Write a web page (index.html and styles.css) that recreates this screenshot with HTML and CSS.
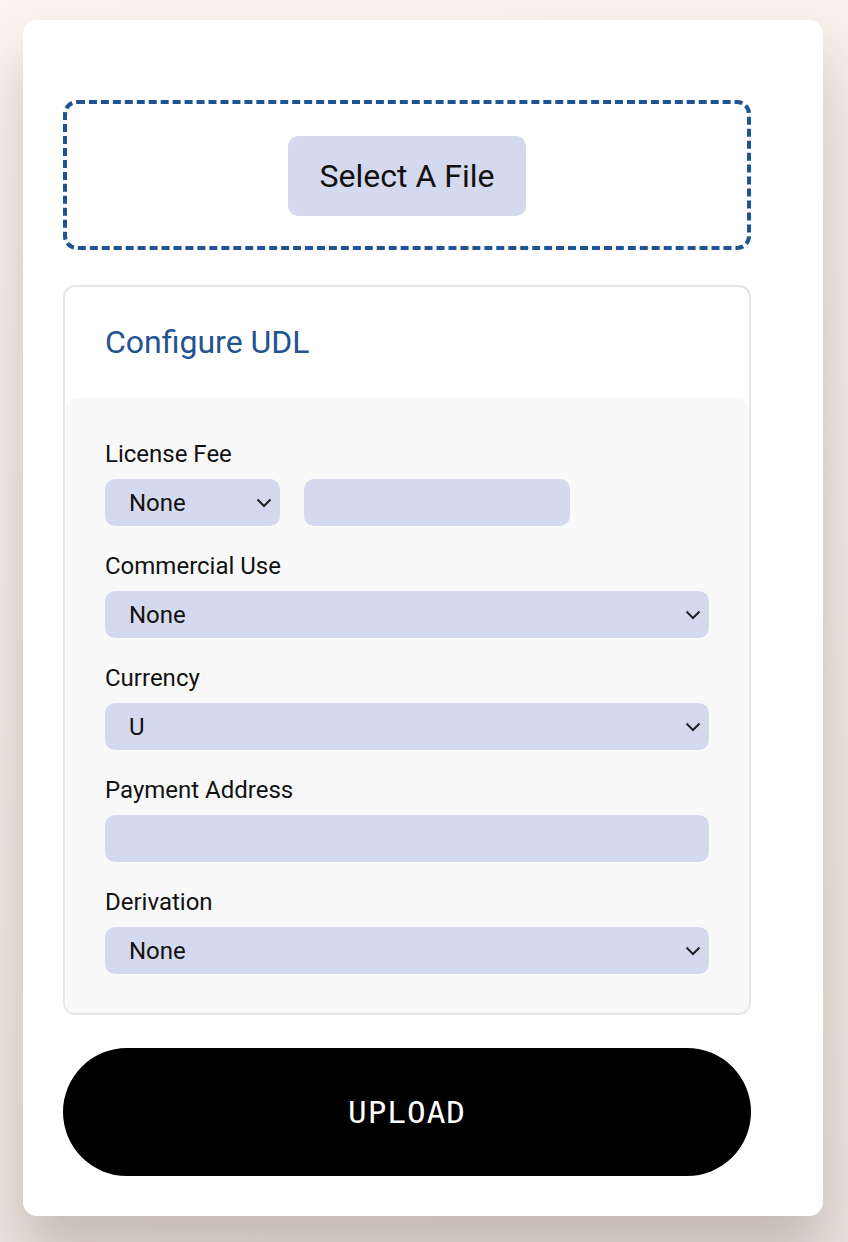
FILE: index.html
```html
<!DOCTYPE html>
<html>
<head>
<meta charset="utf-8">
<link rel="stylesheet" href="styles.css">
</head>
<body>
<main class="card">
  <div class="dropzone">
    <button class="file-btn">Select A File</button>
  </div>
  <section class="config">
    <h2 class="config-title">Configure UDL</h2>
    <div class="config-body">
      <div class="field">
        <label class="label">License Fee</label>
        <div class="row">
          <div class="select small"><span>None</span><svg class="chev" viewBox="0 0 16 10"><path d="M1.5 1.5 L8 8 L14.5 1.5"/></svg></div>
          <div class="input mid"></div>
        </div>
      </div>
      <div class="field">
        <label class="label">Commercial Use</label>
        <div class="select"><span>None</span><svg class="chev" viewBox="0 0 16 10"><path d="M1.5 1.5 L8 8 L14.5 1.5"/></svg></div>
      </div>
      <div class="field">
        <label class="label">Currency</label>
        <div class="select"><span>U</span><svg class="chev" viewBox="0 0 16 10"><path d="M1.5 1.5 L8 8 L14.5 1.5"/></svg></div>
      </div>
      <div class="field">
        <label class="label">Payment Address</label>
        <div class="input"></div>
      </div>
      <div class="field">
        <label class="label">Derivation</label>
        <div class="select"><span>None</span><svg class="chev" viewBox="0 0 16 10"><path d="M1.5 1.5 L8 8 L14.5 1.5"/></svg></div>
      </div>
    </div>
  </section>
  <button class="upload">UPLOAD</button>
</main>
</body>
</html>
```
FILE: styles.css
```css
html, body {
  margin: 0;
  padding: 0;
}
body {
  min-height: 1242px;
  background: linear-gradient(160deg, #fbf4ef 0%, #f3ebe6 50%, #ede4df 100%);
  font-family: Roboto, "Noto Sans", sans-serif;
  overflow: hidden;
}
.card {
  width: 688px;
  margin: 20px auto 0;
  padding: 80px 72px 40px 40px;
  background: #fff;
  border-radius: 14px;
  box-shadow: 0 40px 60px rgba(90, 70, 60, 0.28);
  display: flex;
  flex-direction: column;
  position: relative;
  left: -1px;
}
.dropzone {
  height: 142px;
  border: 4px dashed #1f5493;
  border-radius: 14px;
  display: flex;
  align-items: center;
  justify-content: center;
}
.file-btn {
  width: 238px;
  height: 80px;
  border: none;
  border-radius: 10px;
  background: #d5d9ee;
  font-family: Roboto, sans-serif;
  font-size: 32px;
  color: #111;
  margin-top: 2px;
}
.config {
  margin-top: 35px;
  border: 2px solid #e6e6e8;
  border-radius: 12px;
  overflow: hidden;
}
.config-title {
  margin: 0;
  height: 111px;
  box-sizing: border-box;
  padding: 0 0 2px 40px;
  display: flex;
  align-items: center;
  font-weight: 400;
  font-size: 32px;
  color: #235391;
}
.config-body {
  margin: 0 1px;
  background: #f9f9f9;
  border-radius: 10px 10px 0 0;
  padding: 42px 39px 39px 39px;
  display: flex;
  flex-direction: column;
  gap: 26px;
}
.field {
  display: flex;
  flex-direction: column;
  gap: 11px;
}
.label {
  font-size: 24px;
  line-height: 28px;
  color: #111;
}
.row {
  display: flex;
  gap: 24px;
}
.select, .input {
  height: 47px;
  border-radius: 10px;
  background: #d5d9ee;
  box-sizing: border-box;
}
.select {
  display: flex;
  align-items: center;
  justify-content: space-between;
  padding: 0 8px 0 24px;
  font-size: 24px;
  color: #111;
}
.small {
  width: 175px;
}
.input.mid {
  width: 266px;
}
.chev {
  width: 16px;
  height: 10px;
  fill: none;
  stroke: #222;
  stroke-width: 2;
}
.upload {
  margin-top: 33px;
  height: 128px;
  border: none;
  border-radius: 64px;
  background: #000;
  color: #fff;
  font-family: "DejaVu Sans Mono", monospace;
  font-size: 31px;
  letter-spacing: 1px;
}
```
